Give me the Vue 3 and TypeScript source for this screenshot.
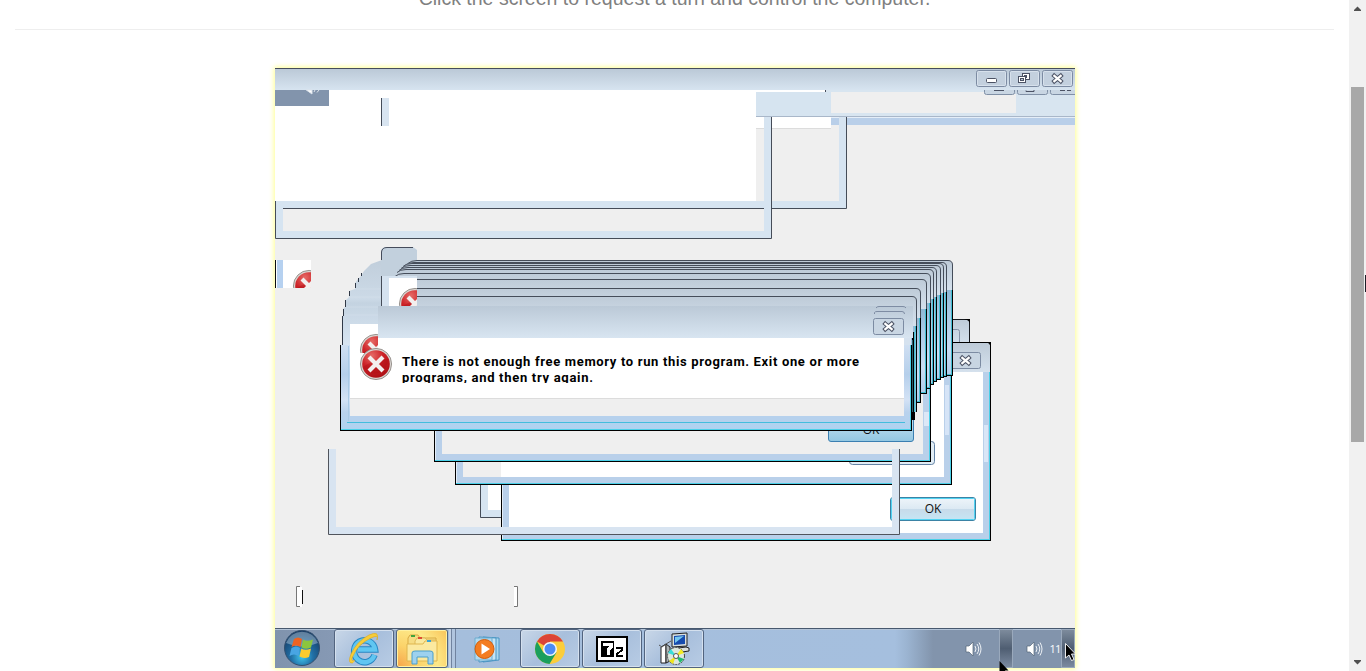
<script setup lang="ts">
interface Pane {
  left: number
  right: number
  top: number
  bottom: number
}

const stack: Pane[] = [
  { left: 408, right: 952, top: 260, bottom: 376 },
  { left: 405, right: 946, top: 262, bottom: 377 },
  { left: 403, right: 943, top: 263, bottom: 378 },
  { left: 401, right: 940, top: 265, bottom: 380 },
  { left: 399, right: 936, top: 267, bottom: 382 },
  { left: 397, right: 933, top: 269, bottom: 385 },
  { left: 395, right: 930, top: 273, bottom: 389 },
  { left: 390, right: 926, top: 279, bottom: 394 },
  { left: 388, right: 920, top: 288, bottom: 403 },
  { left: 386, right: 916, top: 296, bottom: 412 },
]

const outline = (p: Pane): string =>
  `M${p.left} ${p.top + 3.5}Q${p.left + 3} ${p.top + 0.5} ${p.left + 9} ${p.top + 0.5}H${p.right - 4}Q${p.right + 0.5} ${p.top + 0.5} ${p.right + 0.5} ${p.top + 5}V${p.top + 30}`

const steps: [number, number, number][] = [
  [361, 273, 276],
  [358, 278, 282],
  [355, 283, 288],
  [349, 291, 296],
  [345, 300, 307],
  [343, 309, 316],
  [342, 316, 345],
]

const captionButtons: number[] = [976, 1009, 1042]
const clippedButtons: number[] = [984, 1017, 1050]
</script>

<template>
  <div class="page">
    <main class="content">
      <p class="hint"><span>Click the screen to request a turn and control the computer.</span></p>
      <div class="rule"></div>
      <div class="screen">
        <svg class="desktop" width="800" height="560" viewBox="275 68 800 560">
          <defs>
            <linearGradient id="title" x1="0" y1="0" x2="0" y2="1">
              <stop offset="0" stop-color="#bbc9d7" />
              <stop offset="1" stop-color="#d8e5f1" />
            </linearGradient>
            <linearGradient id="pane" x1="0" y1="0" x2="0" y2="1">
              <stop offset="0" stop-color="#becbd8" />
              <stop offset="1" stop-color="#d5e1ed" />
            </linearGradient>
            <linearGradient id="edge" x1="0" y1="0" x2="0" y2="1">
              <stop offset="0" stop-color="#8fb9d6" />
              <stop offset="0.25" stop-color="#a9c8e4" />
              <stop offset="0.7" stop-color="#c9dcf2" />
              <stop offset="1" stop-color="#b0cdea" />
            </linearGradient>
            <linearGradient id="fan" x1="0" y1="0" x2="0" y2="1">
              <stop offset="0" stop-color="#c1cedb" />
              <stop offset="0.45" stop-color="#ccdae7" />
              <stop offset="0.5" stop-color="#c4d3e1" />
              <stop offset="1" stop-color="#d8e5f2" />
            </linearGradient>
            <linearGradient id="frame" x1="0" y1="0" x2="0" y2="1">
              <stop offset="0" stop-color="#cfdff2" />
              <stop offset="0.35" stop-color="#b5cfeb" />
              <stop offset="0.65" stop-color="#d3e2f5" />
              <stop offset="0.8" stop-color="#b9d2ed" />
              <stop offset="1" stop-color="#afd2f0" />
            </linearGradient>
            <linearGradient id="okdown" x1="0" y1="0" x2="0" y2="1">
              <stop offset="0" stop-color="#c8e2f0" />
              <stop offset="1" stop-color="#92c7e2" />
            </linearGradient>
            <linearGradient id="okfocus" x1="0" y1="0" x2="0" y2="1">
              <stop offset="0" stop-color="#eef5fa" />
              <stop offset="0.5" stop-color="#dce9f3" />
              <stop offset="0.52" stop-color="#c7dbea" />
              <stop offset="1" stop-color="#c5e6f5" />
            </linearGradient>
            <radialGradient id="red" cx="0.35" cy="0.2" r="0.9">
              <stop offset="0" stop-color="#e66a66" />
              <stop offset="0.45" stop-color="#cc2227" />
              <stop offset="1" stop-color="#a80c12" />
            </radialGradient>
            <g id="error">
              <circle r="15.6" fill="#d9d4d0" stroke="#918b87" stroke-width="0.9" />
              <circle r="13.8" fill="url(#red)" />
              <path d="M-13 3Q-6-3 12-5A13.5 13.5 0 0 1-13 3Z" fill="#a90b12" opacity="0.35" />
              <path d="M-7-7L7 7M7-7L-7 7" stroke="#f3efee" stroke-width="4.2" />
            </g>
            <g id="cross">
              <path d="M-3.2-2.7L3.2 2.7M3.2-2.7L-3.2 2.7" stroke="#4b5264" stroke-width="4.200" stroke-linecap="square" />
              <path d="M-3.2-2.7L3.2 2.7M3.2-2.7L-3.2 2.7" stroke="#fff" stroke-width="2.200" stroke-linecap="square" />
            </g>
            <clipPath id="clipA"><rect x="283" y="260" width="28" height="28" /></clipPath>
            <clipPath id="clipB"><rect x="389" y="278" width="28" height="28" /></clipPath>
            <clipPath id="clipC"><rect x="350" y="324" width="28" height="29" /></clipPath>
            <clipPath id="clipText"><rect x="398" y="340" width="480" height="43" /></clipPath>
            <clipPath id="clipOk"><rect x="828" y="431" width="90" height="12" /></clipPath>
          </defs>

          <rect x="275" y="68" width="800" height="560" fill="#efefef" />

          <!-- maximised window and the remains beneath it -->
          <rect x="275" y="90" width="550" height="27" fill="#fff" />
          <rect x="275" y="92" width="481" height="109" fill="#fff" />
          <rect x="275" y="69" width="800" height="22" fill="url(#title)" />
          <rect x="275" y="90" width="550" height="2" fill="#fff" />
          <rect x="275" y="68" width="800" height="1" fill="#454c5b" />
          <rect x="825" y="90" width="250" height="26" fill="#d8e5f0" />
          <rect x="756" y="92" width="75" height="24" fill="#d6e4f0" />
          <rect x="825" y="90" width="1" height="2" fill="#454c5b" />
          <rect x="831" y="92" width="185" height="21" fill="#efefef" />
          <rect x="984" y="90" width="91" height="4" fill="#c9d6e3" />
          <g fill="none" stroke="#8090a6">
            <path v-for="x in clippedButtons" :key="x" :d="`M${x + 0.5} 90V92.5Q${x + 0.5} 94.5 ${x + 2.5} 94.5H${x + 28.5}Q${x + 30.5} 94.5 ${x + 30.5} 92.5V90`" />
            <path d="M994 90.5H1004M1026 90.5V91.5H1034V90M1060 90.5H1065M1067 90.5H1071" stroke="#4b5264" />
          </g>
          <rect x="756" y="116" width="319" height="1" fill="#a9b7c9" />
          <rect x="756" y="117" width="75" height="11" fill="#fff" />
          <rect x="756" y="128" width="75" height="1" fill="#dcdcdc" />
          <rect x="831" y="117" width="244" height="1" fill="#e5eef8" />
          <rect x="831" y="118" width="244" height="7" fill="#b9cfe9" />

          <path d="M275 201H839V125H846V208H275Z" fill="#d6e4f1" />
          <rect x="839" y="117" width="7" height="8" fill="#d6e4f1" />
          <path d="M283 208.5H846.5V117" fill="none" stroke="#454c58" />
          <path d="M764 117H771V238H276V201H283V231H764Z" fill="#d6e4f1" />
          <path d="M275.5 201V238.5H771.5V117" fill="none" stroke="#454c58" />

          <g v-for="x in captionButtons" :key="x">
            <rect :x="x + 0.5" y="70.5" width="30" height="16" rx="2" fill="#c3d0de" stroke="#7c8ba2" />
            <rect :x="x + 1.5" y="71.5" width="28" height="14" rx="1" fill="none" stroke="#d7e1ec" />
          </g>
          <rect x="986.5" y="78.5" width="10" height="4" rx="1" fill="#fff" stroke="#4b5264" />
          <rect x="1022.500" y="73.500" width="7" height="6" fill="#fff" stroke="#4b5264" />
          <rect x="1024.500" y="75.500" width="2" height="2" fill="#9aa6b6" stroke="#4b5264" />
          <rect x="1018.500" y="76.500" width="7" height="6" fill="#fff" stroke="#4b5264" />
          <rect x="1020.500" y="78.500" width="3" height="2" fill="#b9c6d4" stroke="#4b5264" />
          <use href="#cross" x="1057.500" y="78.500" />

          <rect x="275" y="90" width="54" height="16" fill="#8294ac" />
          <path d="M306 90H312V94L307 90.500M315 90L314 92M319 90L317 92.500" fill="#fff" stroke="#dce3eb" />
          <rect x="381" y="98" width="1" height="28" fill="#454c58" />
          <rect x="382" y="98" width="7" height="28" fill="#d8e4f0" />

          <rect x="275" y="260" width="36" height="28" fill="#fff" />
          <rect x="275" y="260" width="1" height="28" fill="#0b0d11" />
          <rect x="277" y="260" width="6" height="28" fill="#b6d1f0" />
          <g clip-path="url(#clipA)"><use href="#error" x="309" y="286" /></g>

          <!-- dialogs in the background -->
          <path d="M940 319H966Q969 319 969 322V345H940Z" fill="url(#pane)" />
          <path d="M940 319.500H969.500V345" fill="none" stroke="#15181d" />
          <path d="M964 319H970V325Q970 320 964 319" fill="#000" />
          <path d="M940 329.500H957.500Q959.500 329.500 959.500 331.500V342" fill="none" stroke="#8592a7" />
          <rect x="501" y="342" width="490" height="199" fill="#000" />
          <rect x="502" y="343" width="488" height="197" fill="#4ad0e8" />
          <rect x="502" y="344" width="487" height="195" fill="#b9d0ea" />
          <rect x="502" y="484" width="1" height="55" fill="#e3edf8" />
          <rect x="502" y="343" width="488" height="29" fill="url(#pane)" />
          <path d="M986 342H991V348Q990 343 986 342" fill="#000" />
          <rect x="984" y="425" width="4" height="37" fill="#d9e6f7" />
          <rect x="509" y="372" width="474" height="161" fill="#fff" />
          <rect x="940.500" y="352.500" width="40" height="16" rx="2" fill="#c8d5e2" stroke="#7c8ba2" />
          <use href="#cross" x="965.500" y="360.500" />

          <rect x="890.500" y="497.500" width="85" height="23" rx="2.500" fill="url(#okfocus)" stroke="#3b83a5" />
          <rect x="891.500" y="498.500" width="83" height="21" rx="1" fill="none" stroke="#52d3f2" />
          <text x="933" y="513" text-anchor="middle" class="button-text">OK</text>

          <path d="M480 485H501V518H480Z" fill="#d6e4f1" />
          <rect x="488" y="485" width="13" height="25" fill="#fff" />
          <path d="M480.500 485V517.500H501" fill="none" stroke="#454c58" />

          <rect x="455" y="370" width="497" height="115" fill="#000" />
          <rect x="456" y="370" width="495" height="114" fill="#4ad0e8" />
          <rect x="456" y="370" width="494" height="113" fill="#b9d0ea" />
          <rect x="456" y="461" width="1" height="22" fill="#e3edf8" />
          <rect x="463" y="370" width="481" height="107" fill="#fff" />
          <rect x="463" y="370" width="38" height="107" fill="#efefef" />
          <rect x="945" y="385" width="4" height="50" fill="#d6e4f7" />
          <rect x="849.500" y="441.500" width="85" height="23" rx="3" fill="#e2edf5" stroke="#6383a5" />

          <rect x="434" y="380" width="497" height="82" fill="#000" />
          <rect x="435" y="380" width="495" height="81" fill="#4ad0e8" />
          <rect x="435" y="380" width="494" height="80" fill="#b9d0ea" />
          <rect x="435" y="431" width="1" height="29" fill="#e3edf8" />
          <rect x="442" y="380" width="481" height="74" fill="#efefef" />
          <rect x="924" y="412" width="5" height="14" fill="#dce8f7" />
          <rect x="828.500" y="417.500" width="85" height="24" rx="2.500" fill="url(#okdown)" stroke="#3c7fb1" />
          <g clip-path="url(#clipOk)"><text x="871" y="434" text-anchor="middle" class="button-text">OK</text></g>

          <path d="M329 449H336V527H892V449H899V534H329Z" fill="#d8e4f1" />
          <path d="M328.500 449V534.500H899.500V449" fill="none" stroke="#50545c" />

          <!-- trail left by a dragged dialog -->
          <path d="M382 260L371 264L364 271L361 276L358 279L355 283V289L349 291V297L346 300L345 307L343 309V316L342 318V346H385V260Z" fill="url(#fan)" />
          <path d="M355 289H381M349 297H381M345 307H378M343 315H378" stroke="#d7e2ed" opacity="0.55" />
          <rect v-for="s in steps" :key="s[0]" :x="s[0]" :y="s[1]" width="1" :height="s[2] - s[1]" fill="#303846" />
          <path d="M381 276V252Q381 247 387 247H413L417 250V276Z" fill="#c2d0dd" />
          <path d="M381.500 260V252Q382 247.500 387 247.500H413" fill="none" stroke="#454c5b" />

          <g v-for="p in stack" :key="p.right">
            <path :d="`${outline(p)}H${p.left}Z`" fill="url(#pane)" />
            <rect :x="p.right - 9" :y="p.top + 30" width="10" :height="p.bottom - p.top - 30" fill="#000" />
            <rect :x="p.right - 9" :y="p.top + 30" width="9" :height="p.bottom - p.top - 31" fill="#42bdd1" />
            <rect :x="p.right - 9" :y="p.top + 30" width="8" :height="p.bottom - p.top - 32" fill="url(#edge)" />
            <path :d="outline(p)" fill="none" stroke="#454d5a" />
          </g>
          <rect x="912" y="332" width="3" height="88" fill="#000" />
          <rect x="914" y="332" width="1" height="80" fill="#42bdd1" />
          <rect x="912" y="340" width="1" height="72" fill="#27606c" />
          <rect x="915" y="332" width="1" height="80" fill="#7ec0da" />

          <rect x="381" y="276" width="36" height="30" fill="#d5e2ef" />
          <rect x="381" y="276" width="1" height="30" fill="#454c58" />
          <rect x="389" y="278" width="28" height="28" fill="#fff" />
          <g clip-path="url(#clipB)"><use href="#error" x="415" y="304" /></g>

          <!-- foreground dialog -->
          <rect x="340" y="345" width="572" height="86" fill="#000" />
          <rect x="341" y="345" width="570" height="85" fill="#4ad0e8" />
          <rect x="341" y="345" width="569" height="84" fill="url(#frame)" />
          <rect x="378" y="306" width="535" height="32" fill="url(#title)" />
          <rect x="904" y="338" width="7" height="7" fill="#d5e2ef" />
          <rect x="350" y="324" width="28" height="74" fill="#fff" />
          <rect x="378" y="338" width="526" height="60" fill="#fff" />
          <rect x="350" y="398" width="554" height="1" fill="#dcdcdc" />
          <rect x="350" y="399" width="554" height="17" fill="#efefef" />
          <rect x="348" y="416" width="557" height="6" fill="#b6d1ed" />
          <rect x="347" y="422" width="558" height="1" fill="#43bddd" />
          <path d="M348.500 346V421" stroke="#a9cae6" />
          <path d="M876 308Q877 306.500 879 306.500H903Q905 306.500 906 308M874.500 314V312.500Q875 311.500 877 311.500H902Q904.500 311.500 904.500 314" fill="none" stroke="#7e8ca3" />
          <rect x="873.500" y="318.500" width="30" height="16" rx="2" fill="#c9d6e3" stroke="#7c8ba2" />
          <use href="#cross" x="888.500" y="326.500" />
          <g clip-path="url(#clipC)"><use href="#error" x="376" y="350" /></g>
          <rect x="360" y="353" width="8" height="3" fill="#fff" />
          <use href="#error" x="376" y="364" />
          <g class="message" clip-path="url(#clipText)">
            <text x="402" y="366" textLength="457">There is not enough free memory to run this program. Exit one or more</text>
            <text x="402" y="382" textLength="191">programs, and then try again.</text>
          </g>

          <!-- edit box remains -->
          <rect x="296" y="587" width="6" height="20" fill="#fff" />
          <path d="M300 586.500H296.500V606.500H300" fill="none" stroke="#777" />
          <rect x="302" y="590" width="1" height="14" fill="#111" />
          <rect x="514" y="587" width="3" height="20" fill="#fff" />
          <path d="M514 586.500H517.500V606.500H514" fill="none" stroke="#777" />
        </svg>

        <div class="taskbar">
          <div class="start">
            <svg width="38" height="38" viewBox="0 0 38 38">
              <defs>
                <radialGradient id="orb" cx="0.5" cy="0.75" r="0.7">
                  <stop offset="0" stop-color="#42c7ed" />
                  <stop offset="0.45" stop-color="#216fa5" />
                  <stop offset="1" stop-color="#173d66" />
                </radialGradient>
              </defs>
              <circle cx="19" cy="19" r="17.500" fill="url(#orb)" stroke="#34506f" />
              <path d="M3 14A17 17 0 0 1 35 14Q19 21 3 14" fill="#d1e4ef" opacity="0.4" />
              <path d="M11 10Q15 7 19 10L17.500 18Q13 15 8.500 18Z" fill="#ee6322" />
              <path d="M20 10.500Q24 13 30 10.500L28 18.500Q23 21 18.500 18.500Z" fill="#8cc63e" />
              <path d="M8.500 19Q13 16 17 19L15.500 27Q11 24 6.500 27Z" fill="#48a5e3" />
              <path d="M18.300 19.500Q22 22 28 19.500L26 28Q21 30 16.500 27.500Z" fill="#fecb2e" />
            </svg>
          </div>
          <div class="task ie">
            <svg width="36" height="36" viewBox="0 0 36 36">
              <path d="M28.500 24A10.500 11 0 1 1 29 18.500H12" fill="none" stroke="#2787c4" stroke-width="6.500" />
              <path d="M28.500 24A10.500 11 0 1 1 29 18.500H12" fill="none" stroke="#60c6f1" stroke-width="4.500" />
              <path d="M7 32Q1 33 5 23Q11 10 23 4Q34-1 31 9Q33 3 25 7Q12 13 7 25Q4 31 9 29.500" fill="#f7cc38" stroke="#dba91e" stroke-width="0.600" />
            </svg>
          </div>
          <div class="task explorer">
            <svg width="34" height="34" viewBox="0 0 34 34">
              <path d="M3 6L5 3H13L15 6H31V26H3Z" fill="#f6dc82" stroke="#d9aa42" />
              <path d="M10 9L12 6H20L22 8H31V27H10Z" fill="#fae99f" stroke="#dfb958" />
              <path d="M2 12H18L20 9H32V29H2Z" fill="#fbe9a0" stroke="#dfb64f" />
              <path d="M6 4H10" stroke="#41a33c" stroke-width="2" />
              <path d="M13 6H17" stroke="#dd4d31" stroke-width="2" />
              <path d="M22 9H26" stroke="#38a4d6" stroke-width="2" />
              <path d="M7 32V21Q7 19 10 19H25Q28 19 28 21V32H23V25H12V32Z" fill="#9dd1ef" stroke="#4b9fcc" />
            </svg>
          </div>
          <div class="pile"></div>
          <div class="media">
            <svg width="28" height="28" viewBox="0 0 28 28">
              <path d="M9 2L25 3V25L9 27Z" fill="#a9d7ef" stroke="#4995c3" />
              <path d="M5 2L22 3V25L5 27Z" fill="#c5e5f5" stroke="#4995c3" />
              <path d="M1 3H18V25H1Z" fill="#b3daf0" stroke="#6cacce" />
              <circle cx="10.500" cy="14" r="9.500" fill="#f47c20" stroke="#d15d0a" />
              <path d="M7.500 8.500L16 14L7.500 19.500Z" fill="#fff" />
            </svg>
          </div>
          <div class="task chrome">
            <svg width="32" height="32" viewBox="0 0 32 32">
              <circle cx="16" cy="16" r="15" fill="#fbcd3a" />
              <path d="M16 16L3 8.500A15 15 0 0 1 29 8.500H16Z" fill="#dc4437" />
              <path d="M16 16L9.500 19.800L3 8.500A15 15 0 0 0 15.500 31L22.500 19.500Z" fill="#1a9f5d" />
              <circle cx="16" cy="16" r="7" fill="#f4f6f8" />
              <circle cx="16" cy="16" r="5.500" fill="#4c8bf5" />
            </svg>
          </div>
          <div class="task zip">
            <svg width="32" height="26" viewBox="0 0 32 26" shape-rendering="crispEdges">
              <rect x="1" y="1" width="30" height="24" fill="#fff" stroke="#000" stroke-width="2" />
              <rect x="5" y="5" width="13" height="16" fill="#000" />
              <path d="M7 8H15V11L12 14V19" fill="none" stroke="#fff" stroke-width="3" />
              <path d="M20 12H26V14L21 18V20H27" fill="none" stroke="#000" stroke-width="2" />
            </svg>
          </div>
          <div class="task setup">
            <svg width="32" height="34" viewBox="0 0 32 34">
              <path d="M14 2L29 1V14L14 15Z" fill="#d9e0df" stroke="#222" />
              <path d="M16 4L27 3V12L16 13Z" fill="#164cae" />
              <path d="M17 5L26 4L17 11Z" fill="#75c7ef" />
              <path d="M13 17L28 15L31 16V19L17 21Z" fill="#dadfdb" stroke="#222" />
              <path d="M3 15L8 12V31H3Z" fill="#fff" stroke="#222" />
              <path d="M8 12L12 15V29L8 31Z" fill="#aeb5b7" stroke="#222" />
              <path d="M1 13L4 15L8 12L13 9" fill="none" stroke="#555" />
              <circle cx="18" cy="24" r="8.500" fill="#dce7dd" stroke="#444" stroke-dasharray="2 1" />
              <path d="M18 24L10 21L13 17Z" fill="#36dfdb" />
              <path d="M18 24L23 17L26 21Z" fill="#f3ec20" />
              <path d="M18 24L26 27L22 31Z" fill="#22bd6f" />
              <path d="M18 24L15 32L11 29Z" fill="#efe51c" />
              <circle cx="18" cy="24" r="2.500" fill="#fff" stroke="#555" />
            </svg>
          </div>
          <div class="tray">
            <svg class="speaker" width="17" height="16" viewBox="0 0 17 16">
              <path d="M1 5H4L8 1V15L4 11H1Z" fill="#fff" stroke="#536477" stroke-width="0.700" />
              <path d="M10 5Q12 8 10 11M12 3Q15.500 8 12 13M14 1.500Q18 8 14 14.500" fill="none" stroke="#eef2f6" />
            </svg>
            <div class="peek first"></div>
            <svg class="speaker second" width="17" height="16" viewBox="0 0 17 16">
              <path d="M1 5H4L8 1V15L4 11H1Z" fill="#fff" stroke="#536477" stroke-width="0.700" />
              <path d="M10 5Q12 8 10 11M12 3Q15.500 8 12 13M14 1.500Q18 8 14 14.500" fill="none" stroke="#eef2f6" />
            </svg>
            <span class="clock">11</span>
            <div class="peek"></div>
          </div>
        </div>
        <svg class="pointer ghost" width="12" height="19" viewBox="0 0 12 19">
          <path d="M0.500 0V13L3 10.500L6 16H9L6 9.500H9.500Z" fill="#000" />
        </svg>
        <svg class="pointer" width="12" height="19" viewBox="0 0 12 19">
          <path d="M0.500 0.500V15L4 12L6.500 17.500L9 16.500L6.500 11H10.500Z" fill="#000" stroke="#fff" stroke-width="0.900" />
        </svg>
      </div>
    </main>
    <aside class="scrollbar">
      <svg width="17" height="17" viewBox="0 0 17 17"><path d="M5 11V10L8.500 6.500L12 10V11Z" fill="#505050" /></svg>
      <div class="thumb"></div>
      <svg class="down" width="17" height="17" viewBox="0 0 17 17"><path d="M5 6V7L8.500 10.500L12 7V6Z" fill="#505050" /></svg>
      <i class="caret"></i>
    </aside>
  </div>
</template>

<style>
html,
body {
  margin: 0;
  overflow: hidden;
  background: #fff;
}
</style>

<style scoped>
.page {
  display: flex;
  width: 1366px;
  height: 671px;
  overflow: hidden;
  font-family: "Liberation Sans", Arial, sans-serif;
}
.content {
  width: 1349px;
  height: 671px;
  overflow: hidden;
}
.hint {
  display: flex;
  justify-content: center;
  margin: -12px 0 0;
  height: 20px;
  line-height: 20px;
  font-size: 19.5px;
  color: #808080;
  white-space: nowrap;
}
.rule {
  height: 1px;
  margin: 21px 15px 0;
  background: #eee;
}
.screen {
  position: relative;
  width: 800px;
  height: 600px;
  margin: 38px auto 0;
  box-shadow: 0 0 5px 1px #ffff90;
}
.desktop {
  display: block;
}
.button-text {
  font: 12px "Open Sans", "Noto Sans", sans-serif;
  fill: #111;
}
.message {
  font: bold 13px Roboto, sans-serif;
  fill: #000;
}
.taskbar {
  display: flex;
  box-sizing: border-box;
  height: 40px;
  border-top: 1px solid #47586e;
  background: linear-gradient(90deg, #8093ad 0, #8699b4 58px, #a5bedc 180px, #a5bfde 620px, #9bb4d1 632px, #8294ac 658px, #8294ac);
  box-shadow: inset 0 1px #b3c4d8;
  overflow: hidden;
}
.start {
  width: 59px;
  padding: 0 0 0 8px;
  box-sizing: border-box;
}
.task {
  display: flex;
  align-items: center;
  justify-content: center;
  box-sizing: border-box;
  width: 60px;
  height: 39px;
  margin-right: 2px;
  border: 1px solid #52647f;
  border-radius: 3px;
  background: linear-gradient(135deg, #c9d7e8, #a8bfdc 50%, #b8cce4);
  box-shadow: inset 0 0 0 1px #d4e0ee;
  flex: none;
}
.task.explorer {
  width: 52px;
  background: radial-gradient(circle at 0 100%, #f6a34a, #fbd36a 35%, #fde888 65%, #f9c458);
  box-shadow: inset 0 0 0 1px #fff1a1;
  margin-right: 1px;
}
.pile {
  box-sizing: border-box;
  width: 7px;
  border-left: 2px solid #c2d1e4;
  border-right: 1px solid #71839f;
  background: linear-gradient(90deg, #71839f 1px, #b1c5de 1px);
}
.media {
  width: 64px;
  padding: 6px 0 0 18px;
  box-sizing: border-box;
}
.tray {
  display: flex;
  align-items: center;
  margin-left: auto;
}
.speaker.second {
  margin-left: 13px;
}
.peek {
  box-sizing: border-box;
  width: 14px;
  height: 39px;
  border: 1px solid #9aa9bc;
  background: linear-gradient(180deg, #7d8b9c, #4f5e72 50%, #7b8aa0);
}
.peek.first {
  margin-left: 17px;
}
.clock {
  width: 11px;
  margin-left: 7px;
  color: #f3f6f9;
  font: 11px/16px "Noto Sans", sans-serif;
  letter-spacing: -0.8px;
}
.pointer {
  position: absolute;
  left: 790px;
  top: 575px;
}
.pointer.ghost {
  left: 724px;
  top: 593px;
}
.scrollbar {
  position: relative;
  width: 17px;
  height: 671px;
  background: #f1f1f1;
}
.scrollbar svg {
  display: block;
}
.thumb {
  width: 13px;
  height: 355px;
  margin: 70px 0 0 2px;
  background: #a8a8a8;
}
.scrollbar .down {
  margin-top: 212px;
}
.caret {
  position: absolute;
  right: 0;
  top: 275px;
  width: 1px;
  height: 17px;
  background: #1c1c25;
}
</style>
